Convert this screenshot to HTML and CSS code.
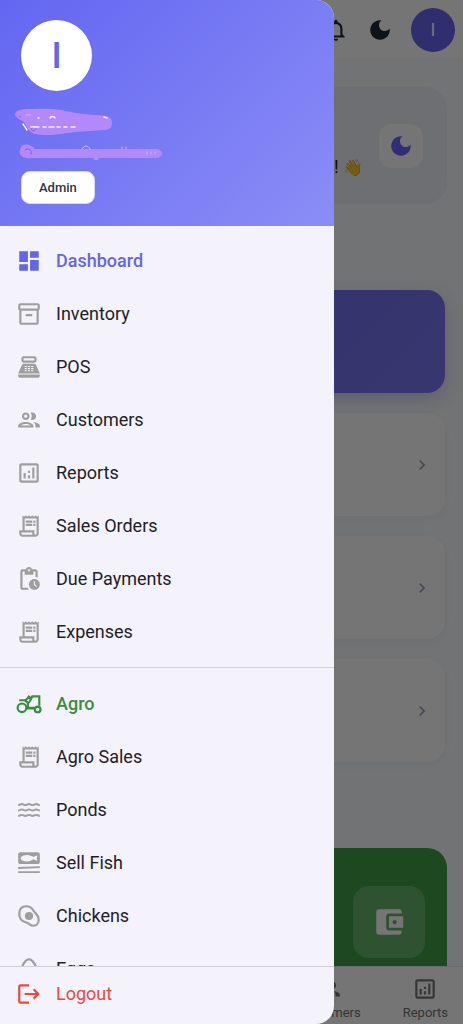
FILE: index.html
```html
<!DOCTYPE html>
<html lang="en">
<head>
<meta charset="utf-8">
<meta name="viewport" content="width=device-width, initial-scale=1">
<title>Dashboard</title>
<link rel="stylesheet" href="styles.css">
</head>
<body>
<svg class="sprite" aria-hidden="true">
  <symbol id="dashboard" viewBox="0 0 24 24"><path d="M3 13h8V3H3v10zm0 8h8v-6H3v6zm10 0h8V11h-8v10zm0-18v6h8V3h-8z"/></symbol>
  <symbol id="box" viewBox="0 0 24 24"><path d="M20 2H4c-1 0-2 .9-2 2v3.01c0 .72.43 1.34 1 1.69V20c0 1.1 1.1 2 2 2h14c.9 0 2-.9 2-2V8.7c.57-.35 1-.97 1-1.69V4c0-1.1-1-2-2-2zm-1 18H5V9h14v11zm1-13H4V4h16v3zM9 12h6v2H9z"/></symbol>
  <symbol id="register" viewBox="0 0 24 24"><path fill-rule="evenodd" d="M17 2H7c-1.1 0-2 .9-2 2v2c0 1.1.9 2 2 2h10c1.1 0 2-.9 2-2V4c0-1.1-.9-2-2-2zm0 4H7V4h10v2zm3 16H4c-1.1 0-2-.9-2-2v-1h20v1c0 1.1-.9 2-2 2zM18.53 10.19C18.21 9.47 17.49 9 16.7 9H7.3c-.79 0-1.51.47-1.83 1.19L2 18h20zM8 11h2v1H8zm3 0h2v1h-2zm3 0h2v1h-2zM8 13h2v1H8zm3 0h2v1h-2zm3 0h2v1h-2zM8 15h2v1H8zm3 0h2v1h-2zm3 0h2v1h-2z"/></symbol>
  <symbol id="people" viewBox="0 0 24 24"><path d="M9 13.75c-2.34 0-7 1.17-7 3.5V19h14v-1.75c0-2.33-4.66-3.5-7-3.5zM4.34 17c.84-.58 2.87-1.25 4.66-1.25s3.82.67 4.66 1.25H4.34zM9 12c1.93 0 3.5-1.57 3.5-3.5S10.93 5 9 5 5.5 6.57 5.5 8.5 7.07 12 9 12zm0-5c.83 0 1.5.67 1.5 1.5S9.83 10 9 10s-1.5-.67-1.5-1.5S8.17 7 9 7zm7.04 6.81c1.16.84 1.96 1.96 1.96 3.44V19h4v-1.75c0-2.02-3.5-3.17-5.96-3.44zM15 12c1.93 0 3.5-1.57 3.5-3.5S16.93 5 15 5c-.54 0-1.04.13-1.5.35.63.89 1 1.98 1 3.15s-.37 2.26-1 3.15c.46.22.96.35 1.5.35z"/></symbol>
  <symbol id="chart" viewBox="0 0 24 24"><path d="M19 3H5c-1.1 0-2 .9-2 2v14c0 1.1.9 2 2 2h14c1.1 0 2-.9 2-2V5c0-1.1-.9-2-2-2zm0 16H5V5h14v14zM7 12h2v5H7zM15 7h2v10h-2zM11 14h2v3h-2zM11 10h2v2h-2z"/></symbol>
  <symbol id="receipt" viewBox="0 0 24 24"><path d="M19.5 3.5L18 2l-1.5 1.5L15 2l-1.5 1.5L12 2l-1.5 1.5L9 2 7.5 3.5 6 2v14H3v3c0 1.66 1.34 3 3 3h12c1.66 0 3-1.34 3-3V2l-1.5 1.5zM15 20H6c-.55 0-1-.45-1-1v-1h10v2zm4-1c0 .55-.45 1-1 1s-1-.45-1-1v-3H8V5h11v14zM9 7h6v2H9zM16 7h2v2h-2zM9 10h6v2H9zM16 10h2v2h-2z"/></symbol>
  <symbol id="pending" viewBox="0 0 24 24"><path d="M17 12c-2.76 0-5 2.24-5 5s2.24 5 5 5 5-2.24 5-5-2.24-5-5-5zm1.65 7.35L16.5 17.2V14h1v2.79l1.85 1.85-.7.71zM18 3h-3.18C14.4 1.84 13.3 1 12 1s-2.4.84-2.82 2H6c-1.1 0-2 .9-2 2v15c0 1.1.9 2 2 2h6.11c-.59-.57-1.07-1.25-1.42-2H6V5h2v3h8V5h2v5.08c.71.1 1.38.31 2 .6V5c0-1.1-.9-2-2-2zm-6 2c-.55 0-1-.45-1-1s.45-1 1-1 1 .45 1 1-.45 1-1 1z"/></symbol>
  <symbol id="tractor" viewBox="0 0 24 24"><g fill="none" stroke="currentColor" stroke-width="2"><circle cx="5.5" cy="15.5" r="4"/><circle cx="20" cy="17" r="2.600"/><path d="M3 8.500h5l3 2.500c1 0 1.500-.5 2-2l2-4h6.500v8.500M11 11v4.500h6M9.500 16h8M9 8.500l3-3M11 4.500l3 2.500"/></g></symbol>
  <symbol id="waves" viewBox="0 0 24 24"><path fill="none" stroke="currentColor" stroke-width="1.800" d="M2 7.500c1.700 0 1.700-1 3.300-1s1.700 1 3.400 1 1.700-1 3.300-1 1.700 1 3.300 1 1.700-1 3.400-1 1.700 1 3.300 1M2 12.500c1.700 0 1.700-1 3.300-1s1.700 1 3.400 1 1.700-1 3.300-1 1.700 1 3.300 1 1.700-1 3.400-1 1.700 1 3.300 1M2 17.500c1.700 0 1.700-1 3.300-1s1.700 1 3.400 1 1.700-1 3.300-1 1.700 1 3.300 1 1.700-1 3.400-1 1.700 1 3.300 1"/></symbol>
  <symbol id="fish" viewBox="0 0 24 24"><path fill-rule="evenodd" d="M4 2h16c1.100 0 2 .9 2 2v7c0 1.100-.9 2-2 2H4c-1.100 0-2-.9-2-2V4c0-1.100.9-2 2-2zm0 5.500C5.500 5 8 4.500 10 4.500c3 0 4.500 1 6 2l3-1.500.8.500-.8 2 .8 2-.8.5-3-1.500c-1.500 1-3 2-6 2s-5-1-6-3zM2 15.700l20-.8v1.800l-20 .8zM2 19.500h20v1.800H2z"/></symbol>
  <symbol id="egg-fried" viewBox="0 0 24 24"><path fill="none" stroke="currentColor" stroke-width="2" d="M9.500 3c4 0 5.500 2 7 4.500S21 11 21 15.500c0 3-2 5.500-5 5.500s-4-2.500-6.500-3S3 15.500 3 10s3-7 6.500-7z"/><circle cx="12" cy="12" r="3.800"/></symbol>
  <symbol id="egg" viewBox="0 0 24 24"><path fill="none" stroke="currentColor" stroke-width="2" d="M12 3c3.500 0 7 6.500 7 11 0 4-3 7-7 7s-7-3-7-7c0-4.500 3.500-11 7-11z"/></symbol>
  <symbol id="logout" viewBox="0 0 24 24"><path d="M17 7l-1.410 1.410L18.170 11H8v2h10.170l-2.580 2.580L17 17l5-5zM4 5h8V3H4c-1.100 0-2 .9-2 2v14c0 1.100.9 2 2 2h8v-2H4V5z"/></symbol>
  <symbol id="wallet" viewBox="0 0 24 24"><path d="M21 18v1c0 1.100-.9 2-2 2H5c-1.110 0-2-.9-2-2V5c0-1.100.89-2 2-2h14c1.100 0 2 .9 2 2v1h-9c-1.110 0-2 .9-2 2v8c0 1.100.89 2 2 2h9zm-9-2h10V8H12v8zm4-2.500c-.83 0-1.500-.67-1.500-1.500s.67-1.500 1.500-1.500 1.500.67 1.500 1.500-.67 1.500-1.500 1.500z"/></symbol>
  <symbol id="moon" viewBox="0 0 24 24"><path d="M12 3c-4.970 0-9 4.030-9 9s4.030 9 9 9 9-4.030 9-9c0-.46-.04-.92-.1-1.360-.98 1.370-2.580 2.260-4.400 2.260-2.980 0-5.400-2.420-5.400-5.400 0-1.810.89-3.420 2.260-4.400-.44-.06-.9-.1-1.360-.1z"/></symbol>
  <symbol id="bell" viewBox="0 0 24 24"><path d="M12 22c1.100 0 2-.9 2-2h-4c0 1.100.9 2 2 2zm6-6v-5c0-3.070-1.630-5.640-4.500-6.320V4c0-.83-.67-1.500-1.500-1.500s-1.500.67-1.500 1.500v.68C7.640 5.360 6 7.920 6 11v5l-2 2v1h16v-1l-2-2zm-2 1H8v-6c0-2.480 1.510-4.500 4-4.500s4 2.020 4 4.500v6z"/></symbol>
  <symbol id="chevron" viewBox="0 0 24 24"><path d="M10 6L8.590 7.410 13.170 12l-4.580 4.590L10 18l6-6z"/></symbol>
</svg>

<div class="app">
  <header class="topbar">
    <button class="icon-button" aria-label="Notifications"><svg class="icon"><use href="#bell"/></svg></button>
    <button class="icon-button" aria-label="Dark mode"><svg class="icon"><use href="#moon"/></svg></button>
    <button class="profile" aria-label="Profile">I</button>
  </header>
  <main class="content">
    <section class="welcome">
      <p class="greeting">! <span class="wave">👋</span></p>
      <button class="theme" aria-label="Toggle theme"><svg class="icon"><use href="#moon"/></svg></button>
    </section>
    <section class="cards">
      <div class="card card-primary"></div>
      <a class="card" href="#a" aria-label="Open"><svg class="chevron"><use href="#chevron"/></svg></a>
      <a class="card" href="#b" aria-label="Open"><svg class="chevron"><use href="#chevron"/></svg></a>
      <a class="card" href="#c" aria-label="Open"><svg class="chevron"><use href="#chevron"/></svg></a>
    </section>
    <section class="balance">
      <span class="balance-icon"><svg><use href="#wallet"/></svg></span>
    </section>
  </main>
  <nav class="tabs">
    <a class="tab" href="#customers"><svg class="icon"><use href="#people"/></svg>Customers</a>
    <a class="tab" href="#reports"><svg class="icon"><use href="#chart"/></svg>Reports</a>
  </nav>
</div>
<div class="scrim"></div>

<aside class="drawer">
  <div class="account">
    <div class="avatar">I</div>
    <svg class="redacted" viewBox="0 0 158 60" aria-hidden="true">
      <path fill="#b388f8" d="M5 10c1-4 6-5 16-5 18-1 28 0 40 3 14 3 30 3 36 4 7 2 7 13-1 14-12 1-26 1-38 3-12 2-24 3-33 1-5-1-8-6-11-12-3-2-9-4-9-8z"/>
      <path fill="#b388f8" d="M11 43c3-4 10-3 14 2h122c7 1 7 8 0 9H22c-6 1-14-1-12-8z"/>
      <g fill="none" stroke="#f4eeff" stroke-linecap="round"><path stroke-width="1.500" d="M13 20l4 6M21 23h8m4 0h3m3 0h5m3 0h3m4 0h3m4 0h4M40 14c1-2 4-2 5 0M28 14h1M94 13l3 1"/><path stroke="#cdb6ff" d="M72 45c2-4 6-4 8 0M84 55h4M112 43v2M116 43v2M137 48v2m4-2v2m4-2v2M16 11h5"/><path stroke="#7a62dd" d="M10 12v1M22 24c-2 3 2 4 4 1M15 46c3-3 7 0 6 4"/></g>
    </svg>
    <span class="role">Admin</span>
  </div>
  <nav class="menu">
    <a class="item item-active" href="#dashboard"><svg class="icon"><use href="#dashboard"/></svg>Dashboard</a>
    <a class="item" href="#inventory"><svg class="icon"><use href="#box"/></svg>Inventory</a>
    <a class="item" href="#pos"><svg class="icon"><use href="#register"/></svg>POS</a>
    <a class="item" href="#customers"><svg class="icon"><use href="#people"/></svg>Customers</a>
    <a class="item" href="#reports"><svg class="icon"><use href="#chart"/></svg>Reports</a>
    <a class="item" href="#orders"><svg class="icon"><use href="#receipt"/></svg>Sales Orders</a>
    <a class="item" href="#due"><svg class="icon"><use href="#pending"/></svg>Due Payments</a>
    <a class="item" href="#expenses"><svg class="icon"><use href="#receipt"/></svg>Expenses</a>
    <hr class="divider">
    <a class="item item-agro" href="#agro"><svg class="icon"><use href="#tractor"/></svg>Agro</a>
    <a class="item" href="#agro-sales"><svg class="icon"><use href="#receipt"/></svg>Agro Sales</a>
    <a class="item" href="#ponds"><svg class="icon"><use href="#waves"/></svg>Ponds</a>
    <a class="item" href="#fish"><svg class="icon"><use href="#fish"/></svg>Sell Fish</a>
    <a class="item" href="#chickens"><svg class="icon"><use href="#egg-fried"/></svg>Chickens</a>
    <a class="item" href="#eggs"><svg class="icon"><use href="#egg"/></svg>Eggs</a>
  </nav>
  <div class="footer">
    <button class="item item-logout"><svg class="icon"><use href="#logout"/></svg>Logout</button>
  </div>
</aside>
</body>
</html>
```

FILE: styles.css
```css
* { box-sizing: border-box; }
body {
  margin: 0;
  font-family: Roboto, "Noto Sans", sans-serif;
  background: #f8fafc;
  color: #1e1e28;
}
button { font: inherit; border: 0; cursor: pointer; }
a { color: inherit; text-decoration: none; }
svg { fill: currentColor; flex: none; }
.sprite { position: absolute; width: 0; height: 0; }
.icon { width: 26px; height: 26px; }

.app { display: flex; flex-direction: column; height: 100vh; overflow: hidden; }
.topbar {
  display: flex;
  align-items: center;
  justify-content: flex-end;
  gap: 18px;
  height: 59px;
  flex: none;
  padding: 0 8px;
  background: #fff;
}
.icon-button { display: flex; padding: 0; background: none; color: #1e293b; }
.profile {
  width: 44px;
  height: 44px;
  padding: 0;
  border-radius: 50%;
  background: #6964f0;
  color: #fff;
  font-size: 18px;
}
.content { flex: 1; min-height: 0; overflow: hidden; padding: 28px 16px 0 18px; }
.welcome {
  display: flex;
  align-items: center;
  justify-content: flex-end;
  gap: 16px;
  height: 117px;
  padding: 0 24px;
  border-radius: 22px;
  background: #f0f2f8;
}
.greeting { margin: 42px 0 0; font-size: 18px; }
.wave { font-size: 16px; }
.theme {
  display: flex;
  align-items: center;
  justify-content: center;
  width: 44px;
  height: 44px;
  padding: 0;
  border-radius: 13px;
  background: #fff;
  color: #6c63ff;
}
.cards { display: flex; flex-direction: column; gap: 20px; margin: 86px 2px 0 0; }
.card {
  display: flex;
  align-items: center;
  justify-content: flex-end;
  height: 103px;
  padding: 0 13px;
  border-radius: 18px;
  background: #fff;
  color: #94a3b8;
  box-shadow: 0 2px 8px rgba(0, 0, 0, 0.04);
}
.card-primary {
  background: linear-gradient(135deg, #6366f1, #7c78f0);
  box-shadow: 0 6px 16px rgba(99, 102, 241, 0.3);
}
.chevron { width: 20px; height: 20px; }
.balance {
  display: flex;
  justify-content: flex-end;
  height: 180px;
  margin-top: 86px;
  padding: 38px 22px;
  border-radius: 20px;
  background: #43a047;
}
.balance-icon {
  display: flex;
  align-items: center;
  justify-content: center;
  width: 72px;
  height: 72px;
  border-radius: 16px;
  background: rgba(255, 255, 255, 0.2);
  color: #fff;
}
.balance-icon svg { width: 34px; height: 34px; }
.tabs {
  display: flex;
  justify-content: flex-end;
  gap: 42px;
  height: 58px;
  flex: none;
  padding: 0 15px;
  border-top: 1px solid #e2e8f0;
  background: #fff;
  color: #757575;
}
.tab {
  display: flex;
  flex-direction: column;
  align-items: center;
  gap: 3px;
  padding-top: 9px;
  font-size: 13px;
  line-height: 16px;
}

.scrim { position: fixed; inset: 0; background: rgba(0, 0, 0, 0.54); }
.drawer {
  position: fixed;
  inset: 0 auto 0 0;
  display: flex;
  flex-direction: column;
  width: 334px;
  max-width: 90vw;
  overflow: hidden;
  border-radius: 0 18px 18px 0;
  background: #f4f2fa;
}
.account {
  display: flex;
  flex-direction: column;
  flex: none;
  padding: 20px 21px 22px;
  background: linear-gradient(135deg, #6366f1, #8b8df6);
}
.avatar {
  display: flex;
  align-items: center;
  justify-content: center;
  width: 71px;
  height: 71px;
  border-radius: 50%;
  background: #fff;
  color: #6366e8;
  font-size: 36px;
  font-weight: 500;
}
.redacted { width: 158px; height: 60px; margin: 13px 0 7px -11px; }
.role {
  align-self: flex-start;
  padding: 0 17px;
  border: 1px solid #d9d8f4;
  border-radius: 9px;
  background: #fff;
  color: #333340;
  font-size: 13px;
  font-weight: 500;
  line-height: 31px;
}
.menu { flex: 1; min-height: 0; overflow: hidden auto; padding-top: 8px; scrollbar-width: none; }
.item {
  display: flex;
  align-items: center;
  gap: 14px;
  width: 100%;
  height: 53px;
  padding: 0 16px;
  background: none;
  font-size: 18px;
}
.item .icon { color: #9e9e9e; }
.item-active, .item-active .icon { color: #6366e8; }
.item-agro, .item-agro .icon { color: #388e3c; }
.item-active, .item-agro { font-weight: 500; }
.item-logout, .item-logout .icon { color: #e64a40; }
.divider { height: 1px; margin: 9px 0; border: 0; background: #d2d0d9; }
.footer { flex: none; height: 58px; border-top: 1px solid #d2d0d9; }
```
